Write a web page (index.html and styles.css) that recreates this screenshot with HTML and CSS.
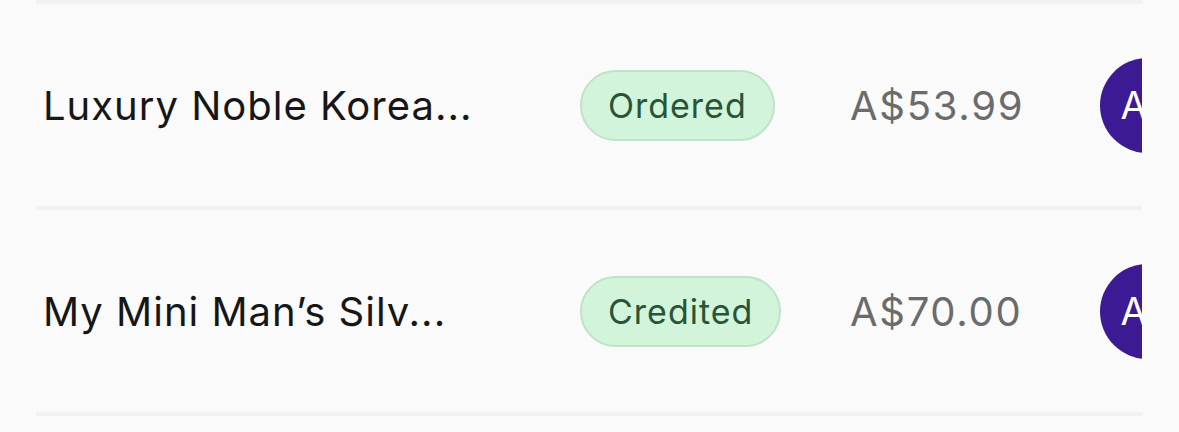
FILE: index.html
```html
<!DOCTYPE html>
<html lang="en">
<head>
    <meta charset="UTF-8">
    <meta name="viewport" content="width=device-width, initial-scale=1.0">
    <title>Orders</title>
    <link rel="stylesheet" href="styles.css">
</head>
<body>
    <div class="order-list">
        <!-- Order row -->
        <div class="order-row">
            <div class="order-name">Luxury Noble Korea...</div>
            <div class="order-status"><span class="pill">Ordered</span></div>
            <div class="order-price">A$53.99</div>
            <div class="order-avatar"><span class="avatar">AU</span></div>
        </div>

        <div class="order-row">
            <div class="order-name">My Mini Man’s Silv...</div>
            <div class="order-status"><span class="pill">Credited</span></div>
            <div class="order-price">A$70.00</div>
            <div class="order-avatar"><span class="avatar">AU</span></div>
        </div>
    </div>
</body>
</html>
```

FILE: styles.css
```css
body {
    margin: 0;
    padding: 0;
    background-color: #fafafa;
    font-family: Inter, "Noto Sans", sans-serif;
    height: 432px;
    overflow: hidden;
}

/* List, clipped on the right edge */
.order-list {
    margin: 0 37px 0 36px;
    border-top: 4px solid #f2f2f2;
    overflow: hidden;
}

.order-row {
    display: grid;
    grid-template-columns: 544px 270px 250px 1fr;
    align-items: center;
    height: 202px;
    border-bottom: 4px solid #f2f2f2;
}

.order-name {
    padding-left: 7px;
    font-size: 40px;
    letter-spacing: 1px;
    color: #161616;
    white-space: nowrap;
}

/* Status pill */
.pill {
    display: inline-block;
    padding: 0 26px;
    height: 67px;
    line-height: 67px;
    border: 2px solid #bfe2c8;
    border-radius: 36px;
    background-color: #d2f4db;
    color: #27553a;
    font-size: 34px;
    letter-spacing: 1px;
}

.order-price {
    font-size: 40px;
    letter-spacing: 1.7px;
    color: #6b6b6b;
    white-space: nowrap;
}

/* Avatar circle (clipped) */
.avatar {
    display: flex;
    align-items: center;
    justify-content: center;
    width: 95px;
    height: 95px;
    border-radius: 50%;
    background-color: #3c1a93;
    color: #ffffff;
    font-size: 38px;
}
```
